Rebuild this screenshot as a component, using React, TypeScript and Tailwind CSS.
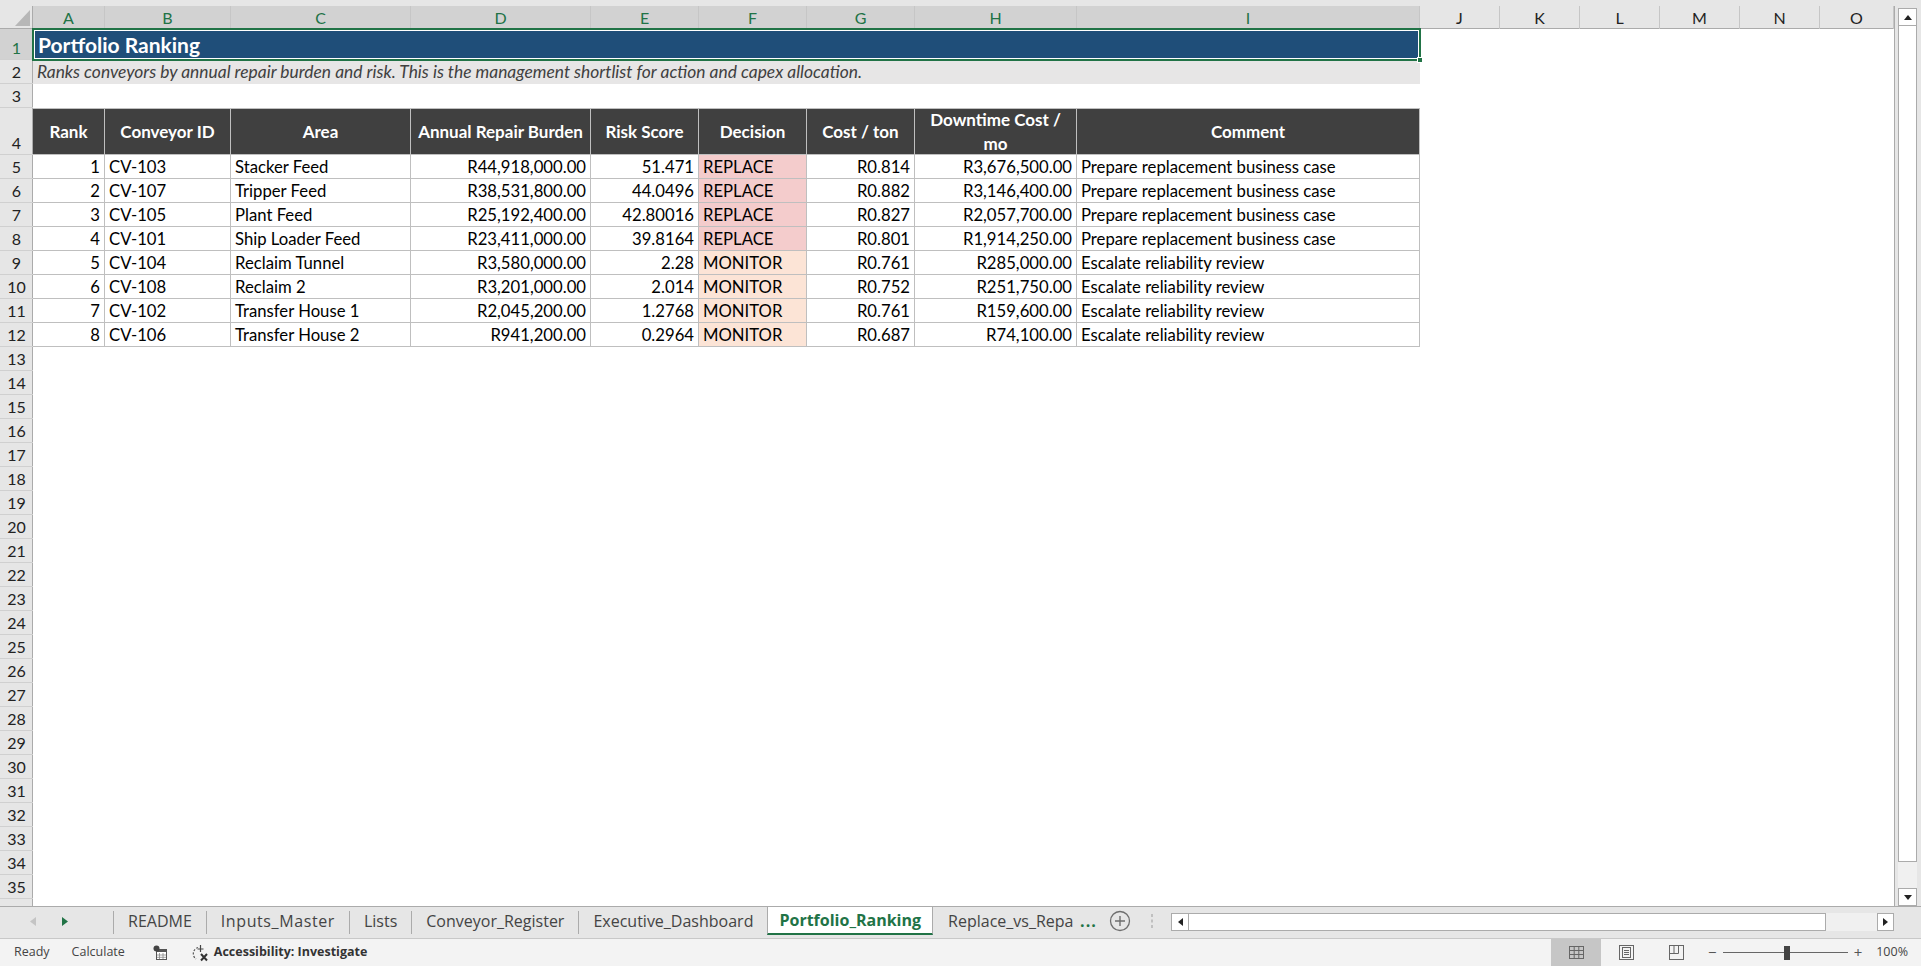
import React from "react";

const W = [
  "w-[72px]",
  "w-[126px]",
  "w-[180px]",
  "w-[180px]",
  "w-[108px]",
  "w-[108px]",
  "w-[108px]",
  "w-[162px]",
  "w-[343px]",
  "w-[80px]",
  "w-[80px]",
  "w-[80px]",
  "w-[80px]",
  "w-[80px]",
  "w-[74px]",
];
const LETTERS = "ABCDEFGHIJKLMNO".split("");
const ALIGN = ["justify-end", "justify-start", "justify-start", "justify-end", "justify-end", "justify-start", "justify-end", "justify-end", "justify-start"];

const HEADERS = ["Rank", "Conveyor ID", "Area", "Annual Repair Burden", "Risk Score", "Decision", "Cost / ton", "", "Comment"];

const ROWS = [
  ["1", "CV-103", "Stacker Feed", "R44,918,000.00", "51.471", "REPLACE", "R0.814", "R3,676,500.00", "Prepare replacement business case"],
  ["2", "CV-107", "Tripper Feed", "R38,531,800.00", "44.0496", "REPLACE", "R0.882", "R3,146,400.00", "Prepare replacement business case"],
  ["3", "CV-105", "Plant Feed", "R25,192,400.00", "42.80016", "REPLACE", "R0.827", "R2,057,700.00", "Prepare replacement business case"],
  ["4", "CV-101", "Ship Loader Feed", "R23,411,000.00", "39.8164", "REPLACE", "R0.801", "R1,914,250.00", "Prepare replacement business case"],
  ["5", "CV-104", "Reclaim Tunnel", "R3,580,000.00", "2.28", "MONITOR", "R0.761", "R285,000.00", "Escalate reliability review"],
  ["6", "CV-108", "Reclaim 2", "R3,201,000.00", "2.014", "MONITOR", "R0.752", "R251,750.00", "Escalate reliability review"],
  ["7", "CV-102", "Transfer House 1", "R2,045,200.00", "1.2768", "MONITOR", "R0.761", "R159,600.00", "Escalate reliability review"],
  ["8", "CV-106", "Transfer House 2", "R941,200.00", "0.2964", "MONITOR", "R0.687", "R74,100.00", "Escalate reliability review"],
];

const RowLabel = ({ n, sel = false }: { n: number | string; sel?: boolean }) => (
  <div
    className={`w-[33px] shrink-0 h-full flex items-end justify-center leading-[22px] text-[16px] border-b border-[#d0d0d0] shadow-[inset_-1px_0_0_#ababab] ${
      sel ? "bg-[#d2d2d2] text-[#217346]" : "bg-[#e6e6e6] text-[#222]"
    }`}
  >
    {n}
  </div>
);

const EmptyRow = ({ n }: { n: number }) => (
  <div className="flex h-[24px]">
    <RowLabel n={n} />
    <div className="flex-1 bg-white" />
  </div>
);

const Grid = () => {
  const empties = [];
  for (let i = 13; i <= 35; i++) empties.push(<EmptyRow key={i} n={i} />);
  return (
    <div className="w-[1894px] h-[900px] overflow-hidden bg-white font-['Lato',sans-serif]">
      {/* column letters */}
      <div className="flex h-[23px]">
        <div className="w-[33px] shrink-0 h-full bg-[#e6e6e6] relative shadow-[inset_-1px_-1px_0_#ababab]">
          <svg className="absolute left-0 top-0" width="33" height="23" viewBox="0 0 33 23">
            <polygon points="15,20 30,20 30,4" fill="#b7b7b7" />
          </svg>
        </div>
        {LETTERS.map((l, i) => (
          <div
            key={l}
            className={`${W[i]} shrink-0 h-full flex items-center justify-center text-[16px] border-r border-[#c6c6c6] shadow-[inset_0_-1px_0_#ababab] ${
              i < 9 ? "bg-[#d2d2d2] text-[#217346]" : "bg-[#e6e6e6] text-[#222]"
            }`}
          >
            {l}
          </div>
        ))}
      </div>

      {/* row 1 title */}
      <div className="flex h-[31px]">
        <RowLabel n={1} sel />
        <div className="w-[1387px] h-full bg-[#1f4e79] relative flex items-center pl-[5px]">
          <span className="text-white font-bold text-[21px] leading-none">Portfolio Ranking</span>
          <div className="absolute -left-px -top-px -right-px -bottom-px border-2 border-[#217346]">
            <div className="absolute inset-0 border border-white" />
          </div>
          <div className="absolute -right-[3px] -bottom-[3px] w-[6px] h-[6px] bg-[#217346] border border-white" />
        </div>
        <div className="flex-1" />
      </div>

      {/* row 2 subtitle */}
      <div className="flex h-[24px]">
        <RowLabel n={2} />
        <div className="w-[1387px] h-full bg-[#e7e6e6] flex items-center pl-[4px]">
          <span className="italic text-[17.4px] text-[#404040] whitespace-nowrap">
            Ranks conveyors by annual repair burden and risk. This is the management shortlist for action and capex allocation.
          </span>
        </div>
      </div>

      {/* row 3 */}
      <EmptyRow n={3} />

      {/* row 4 header */}
      <div className="flex h-[47px]">
        <RowLabel n={4} />
        {HEADERS.map((h, i) => (
          <div
            key={i}
            className={`${W[i]} shrink-0 h-full bg-[#404040] text-white font-bold text-[17px] leading-[24px] flex items-center justify-center text-center whitespace-nowrap border-t border-r border-b border-[#bfbfbf]`}
          >
            {i === 7 ? (
              <span>
                Downtime Cost /<br />
                mo
              </span>
            ) : (
              h
            )}
          </div>
        ))}
      </div>

      {/* rows 5-12 */}
      {ROWS.map((r, ri) => (
        <div key={ri} className="flex h-[24px]">
          <RowLabel n={ri + 5} />
          {r.map((c, i) => (
            <div
              key={i}
              className={`${W[i]} shrink-0 h-full flex items-end leading-[21px] text-[16.7px] text-black px-[4px] whitespace-nowrap border-r border-b border-[#bfbfbf] ${ALIGN[i]} ${
                i === 5 ? (c === "REPLACE" ? "bg-[#f4cccc]" : "bg-[#fce4d6]") : ""
              }`}
            >
              {c}
            </div>
          ))}
        </div>
      ))}

      {empties}

      <div className="flex h-[7px]">
        <div className="w-[33px] h-full bg-[#e6e6e6] shadow-[inset_-1px_0_0_#ababab]" />
      </div>
    </div>
  );
};

const VScroll = () => (
  <div className="w-[27px] h-[900px] border-l border-[#ababab] bg-[#e6e6e6] pl-[3px] pt-[2px]">
    <div className="w-[19px] h-[898px] flex flex-col bg-[#f0f0f0]">
      <div className="h-[18px] border border-[#ababab] bg-white flex items-center justify-center">
        <svg width="8" height="5" viewBox="0 0 8 5">
          <polygon points="0,5 8,5 4,0" fill="#222" />
        </svg>
      </div>
      <div className="h-[836px] border border-[#ababab] border-t-0 bg-white" />
      <div className="flex-1" />
      <div className="h-[18px] border border-[#ababab] bg-white flex items-center justify-center">
        <svg width="8" height="5" viewBox="0 0 8 5">
          <polygon points="0,0 8,0 4,5" fill="#222" />
        </svg>
      </div>
    </div>
  </div>
);

const Sep = () => <div className="w-px h-[23px] bg-[#ababab] mt-[4px] shrink-0" />;

const Tab = ({ label }: { label: string }) => (
  <div className="px-[14px] h-[28px] flex items-center text-[16px] text-[#444] whitespace-nowrap">{label}</div>
);

const TabBar = () => (
  <div className="h-[32px] flex border-t border-[#ababab] bg-[#e6e6e6] font-['Open_Sans',sans-serif]">
    <div className="w-[1171px] flex shrink-0">
      <div className="w-[113px] h-[28px] flex items-center shrink-0">
        <svg className="ml-[30px]" width="6" height="9" viewBox="0 0 6 9">
          <polygon points="6,0 6,9 0,4.5" fill="#c4c4c4" />
        </svg>
        <svg className="ml-[26px]" width="6" height="9" viewBox="0 0 6 9">
          <polygon points="0,0 0,9 6,4.5" fill="#217346" />
        </svg>
      </div>
      <Sep />
      <Tab label="README" />
      <Sep />
      <div className="px-[14px] h-[28px] flex items-center text-[16px] text-[#444] whitespace-nowrap tracking-[0.6px]">
        Inputs_Master
      </div>
      <Sep />
      <Tab label="Lists" />
      <Sep />
      <Tab label="Conveyor_Register" />
      <Sep />
      <Tab label="Executive_Dashboard" />
      <div className="h-[28px] px-[11px] flex items-center bg-white border-l border-r border-[#ababab] border-b-2 border-b-[#217346] text-[16px] font-bold text-[#217346] whitespace-nowrap">
        Portfolio_Ranking
      </div>
      <div className="h-[28px] pl-[15px] flex items-center text-[16px] text-[#444] whitespace-nowrap">
        <span className="w-[126px] overflow-hidden">Replace_vs_Repair</span>
        <span className="ml-[6px] text-[#217346] font-bold tracking-[1px]">...</span>
      </div>
      <div className="flex-1" />
      <div className="h-[28px] flex items-center pr-[17px]">
        <svg width="22" height="22" viewBox="0 0 22 22">
          <circle cx="11" cy="11" r="9.5" fill="none" stroke="#6e6e6e" strokeWidth="1.3" />
          <path d="M11 6v10M6 11h10" stroke="#6e6e6e" strokeWidth="1.4" />
        </svg>
        <svg className="ml-[19px]" width="4" height="16" viewBox="0 0 4 16">
          <rect x="1" y="1" width="2" height="3" fill="#c0c0c0" />
          <rect x="1" y="6.5" width="2" height="3" fill="#c0c0c0" />
          <rect x="1" y="12" width="2" height="3" fill="#c0c0c0" />
        </svg>
      </div>
    </div>
    <div className="w-[723px] shrink-0 pt-[6px] flex">
      <div className="w-[18px] h-[18px] border border-[#ababab] bg-white flex items-center justify-center">
        <svg width="5" height="8" viewBox="0 0 5 8">
          <polygon points="5,0 5,8 0,4" fill="#222" />
        </svg>
      </div>
      <div className="w-[637px] h-[18px] border border-l-0 border-[#ababab] bg-white" />
      <div className="flex-1 h-[18px] bg-[#f0f0f0]" />
      <div className="w-[17px] h-[18px] border border-[#ababab] bg-white flex items-center justify-center">
        <svg width="5" height="8" viewBox="0 0 5 8">
          <polygon points="0,0 0,8 5,4" fill="#222" />
        </svg>
      </div>
    </div>
    <div className="flex-1" />
  </div>
);

const StatusBar = () => (
  <div className="h-[28px] flex items-center border-t border-[#c8c8c8] bg-[#f3f3f3] text-[12.5px] text-[#444] font-['Open_Sans',sans-serif]">
    <span className="ml-[14px]">Ready</span>
    <span className="ml-[22px]">Calculate</span>
    <svg className="ml-[28px]" width="15" height="16" viewBox="0 0 15 16">
      <rect x="3.5" y="4.5" width="10" height="10" fill="#fff" stroke="#555" />
      <rect x="3.5" y="4.5" width="10" height="2.5" fill="#555" />
      <path d="M6.5 8v6M10 8v6M4 10h9M4 12.3h9" stroke="#888" strokeWidth="0.8" />
      <circle cx="3.5" cy="3.5" r="3" fill="#444" />
    </svg>
    <svg className="ml-[22px]" width="21" height="18" viewBox="0 0 21 18">
      <path d="M8 3.5A6.5 6.5 0 0 0 6 15" fill="none" stroke="#555" strokeWidth="1.2" strokeDasharray="2 1.5" />
      <path d="M10.5 1v7M7.5 5h6" stroke="#444" strokeWidth="1.2" />
      <path d="M11 10l6 6.5M17 10l-6 6.5" stroke="#333" strokeWidth="2" />
    </svg>
    <span className="ml-[3px] font-bold text-[#333]">Accessibility: Investigate</span>
    <div className="ml-auto flex items-center h-full">
      <div className="w-[50px] h-full bg-[#c6c6c6] flex items-center justify-center">
        <svg width="15" height="13" viewBox="0 0 15 13">
          <rect x="0.5" y="0.5" width="14" height="12" fill="none" stroke="#666" />
          <path d="M5.2 0.5v12M9.8 0.5v12M0.5 4.5h14M0.5 8.5h14" stroke="#666" />
        </svg>
      </div>
      <div className="w-[50px] h-full flex items-center justify-center">
        <svg width="15" height="15" viewBox="0 0 15 15">
          <rect x="0.5" y="0.5" width="14" height="14" fill="none" stroke="#666" />
          <rect x="3.5" y="2.5" width="8" height="10" fill="none" stroke="#666" />
          <path d="M5 5.5h5M5 7.5h5M5 9.5h5" stroke="#666" />
        </svg>
      </div>
      <div className="w-[50px] h-full flex items-center justify-center">
        <svg width="15" height="15" viewBox="0 0 15 15">
          <rect x="0.5" y="0.5" width="14" height="14" fill="none" stroke="#666" />
          <path d="M0.5 8.5h9V0.5M5 0.5v8" fill="none" stroke="#666" />
        </svg>
      </div>
      <span className="ml-[7px] text-[15px] text-[#555] leading-none">−</span>
      <div className="ml-[6px] w-[125px] h-[14px] relative flex items-center">
        <div className="w-full h-px bg-[#666]" />
        <div className="absolute left-[61px] top-0 w-[6px] h-[14px] bg-[#444]" />
      </div>
      <span className="ml-[6px] text-[15px] text-[#555] leading-none">+</span>
      <span className="ml-[14px] mr-[13px] text-[#444]">100%</span>
    </div>
  </div>
);

export default function App() {
  return (
    <div className="w-[1921px] h-[966px] flex flex-col bg-[#e6e6e6] overflow-hidden">
      <div className="h-[6px] shrink-0 bg-[#e6e6e6]" />
      <div className="flex h-[900px] shrink-0">
        <Grid />
        <VScroll />
      </div>
      <TabBar />
      <StatusBar />
    </div>
  );
}
